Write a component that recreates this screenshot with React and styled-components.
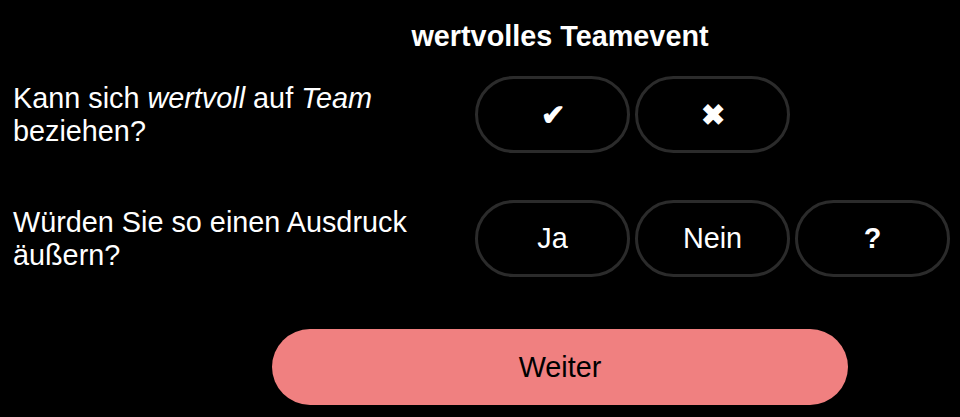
import React from "react";
import styled, { createGlobalStyle } from "styled-components";

const Global = createGlobalStyle`
  html, body { margin: 0; padding: 0; background: #000; }
  body { font-family: "Liberation Sans", Arial, sans-serif; color: #fff; }
`;

const Page = styled.div`
  width: 960px;
  height: 417px;
  background: #000;
  display: flex;
  flex-direction: column;
  overflow: hidden;
`;

const TitleBar = styled.div`
  padding: 19px 0 0 160px;
  display: flex;
  justify-content: center;
  height: 56px;
  box-sizing: border-box;
`;

const Title = styled.h1`
  margin: 0;
  font-size: 28.8px;
  font-weight: 700;
  line-height: 34px;
`;

const Rows = styled.div`
  display: flex;
  flex-direction: column;
  gap: 47px;
  margin-top: 20px;
`;

const Row = styled.div`
  display: grid;
  grid-template-columns: 475px auto;
  align-items: center;
`;

const Label = styled.div`
  padding-left: 13px;
  font-size: 28.8px;
  line-height: 33px;
`;

const Options = styled.div`
  display: flex;
  gap: 5px;
`;

const Choice = styled.button`
  width: 155px;
  height: 77px;
  box-sizing: border-box;
  border: 3px solid #2b2b2b;
  border-radius: 39px;
  background: #000;
  color: #fff;
  font-family: "Liberation Sans", Arial, sans-serif;
  font-size: 28.8px;
  font-weight: ${(p) => (p.$bold ? 700 : 400)};
  cursor: pointer;
  padding: 0;
`;

const Footer = styled.div`
  padding: 52px 0 0 160px;
  display: flex;
  justify-content: center;
`;

const Next = styled.button`
  width: 576px;
  height: 76px;
  border: none;
  border-radius: 38px;
  background: #f08080;
  color: #000;
  font-family: "Liberation Sans", Arial, sans-serif;
  font-size: 28.8px;
  cursor: pointer;
`;

export default function App() {
  return (
    <Page>
      <Global />
      <TitleBar>
        <Title>wertvolles Teamevent</Title>
      </TitleBar>
      <Rows>
        <Row>
          <Label>
            Kann sich <em>wertvoll</em> auf <em>Team</em>
            <br />
            beziehen?
          </Label>
          <Options>
            <Choice $bold>✔</Choice>
            <Choice $bold>✖</Choice>
          </Options>
        </Row>
        <Row>
          <Label>
            Würden Sie so einen Ausdruck
            <br />
            äußern?
          </Label>
          <Options>
            <Choice>Ja</Choice>
            <Choice>Nein</Choice>
            <Choice $bold>?</Choice>
          </Options>
        </Row>
      </Rows>
      <Footer>
        <Next>Weiter</Next>
      </Footer>
    </Page>
  );
}
